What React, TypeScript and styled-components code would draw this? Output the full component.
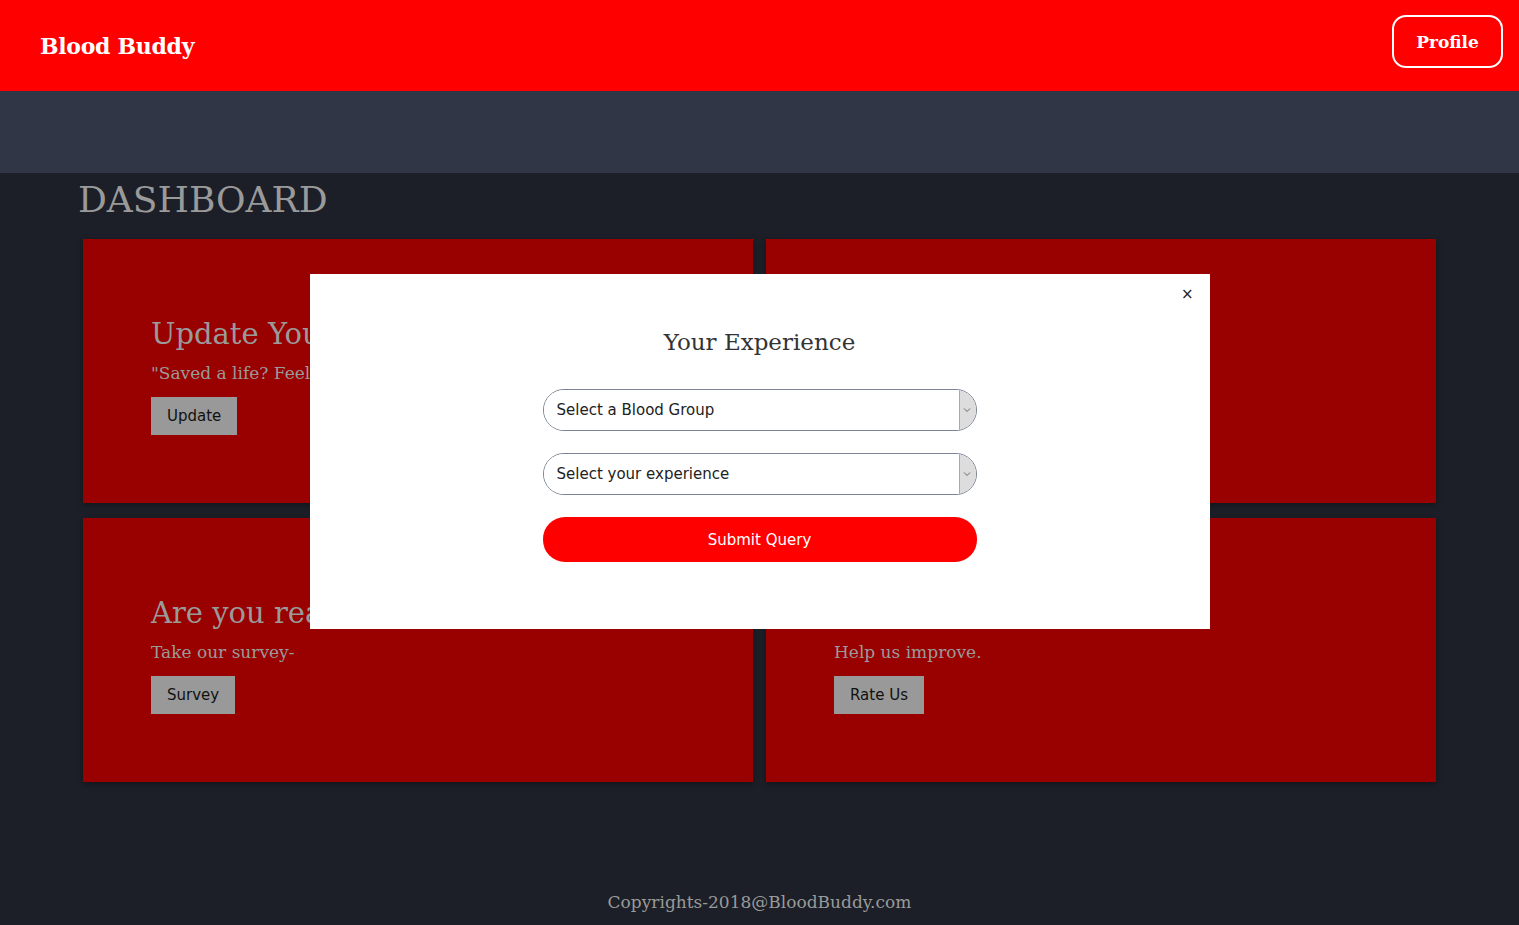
import React from "react";
import styled, { createGlobalStyle } from "styled-components";

const GlobalStyle = createGlobalStyle`
  html, body { margin: 0; padding: 0; }
  body {
    background: #1c1f27;
    font-family: "DejaVu Serif", "Liberation Serif", serif;
  }
  * { box-sizing: border-box; }
`;

const Page = styled.div`
  min-height: 925px;
  display: flex;
  flex-direction: column;
`;

const Header = styled.header`
  height: 91px;
  background: #ff0000;
  display: flex;
  align-items: center;
  justify-content: space-between;
  padding: 0 16px 0 40px;
`;

const Brand = styled.div`
  color: #ffffff;
  font-family: "DejaVu Serif", serif;
  font-weight: 700;
  font-size: 22px;
  letter-spacing: -0.3px;
`;

const ProfileButton = styled.button`
  width: 111px;
  height: 53px;
  margin-top: -8px;
  background: transparent;
  border: 2px solid #ffffff;
  border-radius: 14px;
  color: #ffffff;
  font-family: "DejaVu Serif", serif;
  font-weight: 700;
  font-size: 17px;
  cursor: pointer;
`;

const Band = styled.div`
  height: 82px;
  background: #313646;
`;

const Main = styled.main`
  padding: 0 83px;
`;

const Title = styled.h1`
  margin: 0 0 0 -5px;
  padding-top: 5px;
  height: 66px;
  font-family: "DejaVu Serif", serif;
  font-weight: 400;
  font-size: 36px;
  line-height: 44px;
  color: #9a9a9a;
`;

const Grid = styled.section`
  display: grid;
  grid-template-columns: 1fr 1fr;
  column-gap: 13px;
  row-gap: 15px;
`;

const Card = styled.div`
  height: 264px;
  background: #990000;
  padding: 77px 68px;
  box-shadow: 0 2px 6px rgba(0, 0, 0, 0.35);
`;

const CardTitle = styled.h2`
  margin: 0;
  font-family: "DejaVu Serif", serif;
  font-weight: 400;
  font-size: 29px;
  line-height: 36px;
  color: #9a9a9a;
  white-space: nowrap;
`;

const CardText = styled.p`
  margin: 9px 0 0;
  font-family: "DejaVu Serif", serif;
  font-size: 17px;
  line-height: 24px;
  color: #9a9a9a;
`;

const CardButton = styled.button`
  margin-top: 12px;
  height: 38px;
  padding: 0 16px;
  background: #999999;
  border: none;
  color: #111111;
  font-family: "DejaVu Sans", Verdana, sans-serif;
  font-size: 15px;
  cursor: pointer;
`;

const Footer = styled.footer`
  margin-top: auto;
  padding: 0 0 11px;
  text-align: center;
  font-family: "DejaVu Serif", serif;
  font-size: 17px;
  line-height: 24px;
  color: #9a9a9a;
`;

const Modal = styled.div`
  position: fixed;
  top: 274px;
  left: 50%;
  transform: translateX(-50%);
  width: 900px;
  height: 355px;
  background: #ffffff;
  padding-top: 53px;
  display: flex;
  flex-direction: column;
  align-items: center;
`;

const Close = styled.button`
  position: absolute;
  top: 9px;
  right: 12px;
  background: transparent;
  border: none;
  font-family: "DejaVu Sans", sans-serif;
  font-size: 15px;
  color: #222;
  cursor: pointer;
  padding: 2px 4px;
`;

const ModalTitle = styled.h3`
  margin: 0;
  font-family: "DejaVu Serif", serif;
  font-weight: 400;
  font-size: 23px;
  line-height: 30px;
  color: #333333;
`;

const Form = styled.form`
  margin-top: 32px;
  width: 434px;
  display: flex;
  flex-direction: column;
  gap: 22px;
`;

const SelectBox = styled.div`
  height: 42px;
  border: 1px solid #7b8494;
  border-radius: 21px;
  overflow: hidden;
  display: flex;
  background: #fff;
`;

const Select = styled.select`
  flex: 1;
  appearance: none;
  -webkit-appearance: none;
  border: none;
  outline: none;
  background: #fff;
  padding: 0 0 0 13px;
  font-family: "DejaVu Sans", Verdana, sans-serif;
  font-size: 15px;
  color: #222;
`;

const Arrow = styled.div`
  width: 17px;
  background: #dddddd;
  border-left: 1px solid #a8a8a8;
  display: flex;
  align-items: center;
  justify-content: flex-start;
  padding-left: 3px;
`;

const Submit = styled.button`
  height: 45px;
  border: none;
  border-radius: 22px;
  background: #ff0000;
  color: #ffffff;
  font-family: "DejaVu Sans", Verdana, sans-serif;
  font-size: 15px;
  cursor: pointer;
`;

const Chevron = () => (
  <svg width="8" height="6" viewBox="0 0 8 6">
    <path d="M1 1.5 L4 4.5 L7 1.5" fill="none" stroke="#666" strokeWidth="1" />
  </svg>
);

const cards = [
  { title: "Update Your Status", text: "\"Saved a life? Feel proud, update your status.\"", button: "Update" },
  { title: "Find a Donor", text: "Search donors near you.", button: "Search" },
  { title: "Are you ready to donate?", text: "Take our survey-", button: "Survey" },
  { title: "Rate your experience", text: "Help us improve.", button: "Rate Us" },
];

export default function App() {
  return (
    <>
      <GlobalStyle />
      <Page>
        <Header>
          <Brand>Blood Buddy</Brand>
          <ProfileButton>Profile</ProfileButton>
        </Header>
        <Band />
        <Main>
          <Title>DASHBOARD</Title>
          <Grid>
            {cards.map((c) => (
              <Card key={c.button}>
                <CardTitle>{c.title}</CardTitle>
                <CardText>{c.text}</CardText>
                <CardButton>{c.button}</CardButton>
              </Card>
            ))}
          </Grid>
        </Main>
        <Footer>Copyrights-2018@BloodBuddy.com</Footer>
      </Page>
      <Modal>
        <Close aria-label="close">×</Close>
        <ModalTitle>Your Experience</ModalTitle>
        <Form onSubmit={(e) => e.preventDefault()}>
          <SelectBox>
            <Select defaultValue="">
              <option value="">Select a Blood Group</option>
              <option>A+</option>
              <option>A-</option>
              <option>B+</option>
              <option>B-</option>
              <option>AB+</option>
              <option>AB-</option>
              <option>O+</option>
              <option>O-</option>
            </Select>
            <Arrow><Chevron /></Arrow>
          </SelectBox>
          <SelectBox>
            <Select defaultValue="">
              <option value="">Select your experience</option>
              <option>Excellent</option>
              <option>Good</option>
              <option>Average</option>
              <option>Poor</option>
            </Select>
            <Arrow><Chevron /></Arrow>
          </SelectBox>
          <Submit type="submit">Submit Query</Submit>
        </Form>
      </Modal>
    </>
  );
}
